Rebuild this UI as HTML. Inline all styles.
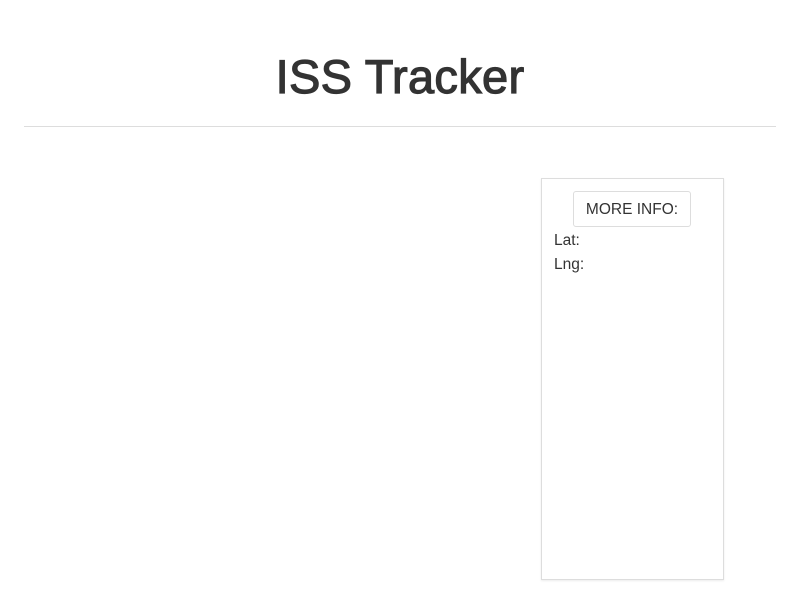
<!DOCTYPE html>
<html><head><style>
body{margin:0;width:800px;height:593px;background:#fff;font-family:"Liberation Sans",sans-serif;color:#333;position:relative;overflow:hidden}
h1{position:absolute;top:49px;left:0;width:800px;text-align:center;margin:0;font-size:47px;font-weight:normal;-webkit-text-stroke:1.2px #333;line-height:56px;color:#333;letter-spacing:0.3px}
.hr{position:absolute;top:126px;left:24px;width:752px;height:1px;background:#ddd}
.panel{position:absolute;left:541px;top:178px;width:181px;height:400px;border:1px solid #ddd;box-shadow:0 1px 2px rgba(0,0,0,.08)}
.btn{position:absolute;left:31px;top:12px;width:116px;height:34px;border:1px solid #ddd;border-radius:3px;font-size:15.5px;line-height:36px;text-align:center;color:#333}
.t{position:absolute;left:12px;font-size:15.5px;color:#333}
</style></head><body>
<h1>ISS Tracker</h1>
<div class="hr"></div>
<div class="panel">
<div class="btn">MORE INFO:</div>
<div class="t" style="top:53px">Lat:</div>
<div class="t" style="top:77px">Lng:</div>
</div>
</body></html>
